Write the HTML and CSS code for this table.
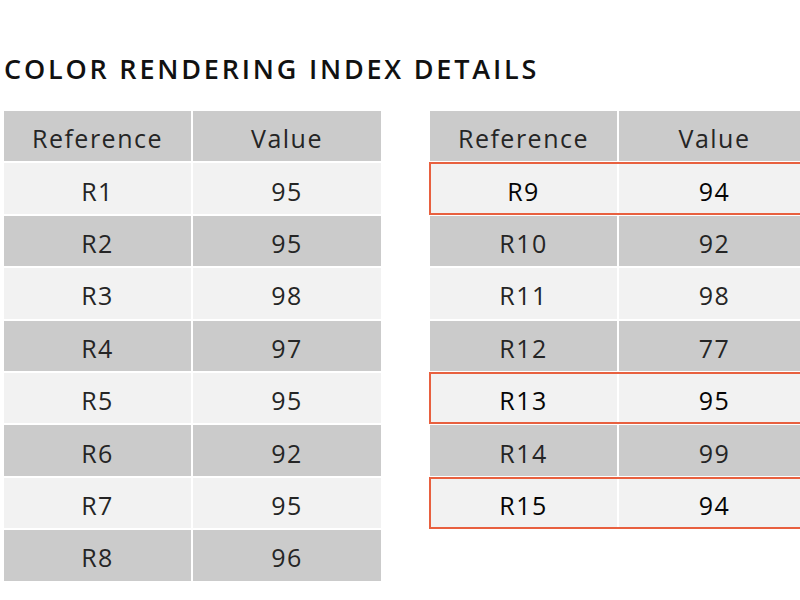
FILE: index.html
```html
<!DOCTYPE html>
<html>
<head>
<meta charset="utf-8">
<link rel="stylesheet" href="styles.css">
</head>
<body>
<main class="page">
  <h1 class="title">COLOR RENDERING INDEX DETAILS</h1>
  <div class="tables">
    <div class="table">
      <div class="row head"><div class="cell">Reference</div><div class="cell">Value</div></div>
      <div class="row light"><div class="cell">R1</div><div class="cell">95</div></div>
      <div class="row dark"><div class="cell">R2</div><div class="cell">95</div></div>
      <div class="row light"><div class="cell">R3</div><div class="cell">98</div></div>
      <div class="row dark"><div class="cell">R4</div><div class="cell">97</div></div>
      <div class="row light"><div class="cell">R5</div><div class="cell">95</div></div>
      <div class="row dark"><div class="cell">R6</div><div class="cell">92</div></div>
      <div class="row light"><div class="cell">R7</div><div class="cell">95</div></div>
      <div class="row dark"><div class="cell">R8</div><div class="cell">96</div></div>
    </div>
    <div class="table table-right">
      <div class="row head"><div class="cell">Reference</div><div class="cell">Value</div></div>
      <div class="row light hl"><div class="cell">R9</div><div class="cell">94</div></div>
      <div class="row dark"><div class="cell">R10</div><div class="cell">92</div></div>
      <div class="row light"><div class="cell">R11</div><div class="cell">98</div></div>
      <div class="row dark"><div class="cell">R12</div><div class="cell">77</div></div>
      <div class="row light hl"><div class="cell">R13</div><div class="cell">95</div></div>
      <div class="row dark"><div class="cell">R14</div><div class="cell">99</div></div>
      <div class="row light hl"><div class="cell">R15</div><div class="cell">94</div></div>
    </div>
  </div>
</main>
</body>
</html>
```
FILE: styles.css
```css
html, body {
  margin: 0;
  padding: 0;
  background: #ffffff;
  overflow: hidden;
}
body {
  width: 800px;
  height: 600px;
  font-family: "Open Sans", "Liberation Sans", sans-serif;
  color: #2a2a2a;
}
.page {
  padding: 52px 0 0 4px;
}
.title {
  margin: 0;
  font-size: 27px;
  font-weight: 600;
  line-height: 34px;
  color: #111;
  letter-spacing: 2.8px;
}
.tables {
  margin-top: 25px;
  display: flex;
  gap: 49px;
  align-items: flex-start;
}
.table {
  display: flex;
  flex-direction: column;
  gap: 2px;
  width: 377px;
  flex: none;
}
.table-right {
  width: 376px;
}
.row {
  display: grid;
  grid-template-columns: 187px 1fr;
  gap: 2px;
  height: 50.4px;
}
.cell {
  display: flex;
  align-items: center;
  justify-content: center;
  padding-top: 4px;
  font-size: 25px;
  font-weight: 400;
  letter-spacing: 1.5px;
  color: #252525;
}
.head .cell, .dark .cell {
  background: #cbcbcb;
}
.light .cell {
  background: #f2f2f2;
}
.hl {
  outline: 2px solid #e8603f;
  outline-offset: -1px;
}
.hl .cell {
  color: #050505;
  font-weight: 500;
}
.table-right .row {
  width: 380px;
}
```
